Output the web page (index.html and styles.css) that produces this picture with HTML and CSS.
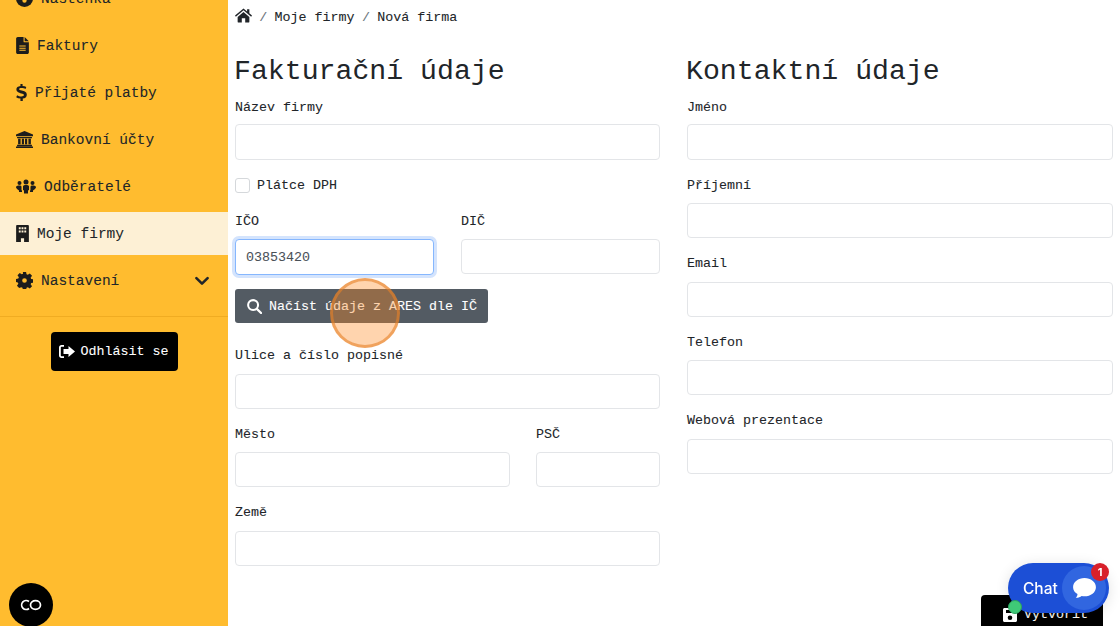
FILE: index.html
```html
<!DOCTYPE html>
<html lang="cs">
<head>
<meta charset="utf-8">
<title>Nová firma</title>
<link rel="stylesheet" href="styles.css">
</head>
<body>
<div class="app">
  <aside class="sidebar">
    <nav class="nav">
      <a class="item"><svg class="ico i-gauge" viewBox="0 0 16 16"><circle cx="8" cy="8" r="8"/><circle cx="8" cy="10" r="2" fill="#ffbc2f"/></svg><span>Nástěnka</span></a>
      <a class="item"><svg class="ico i-file" viewBox="0 0 12 16"><path d="M1.5 0H7v4.200c0 .5.3.8.8.8H12v9.500c0 .8-.7 1.500-1.500 1.500h-9C.7 16 0 15.300 0 14.500v-13C0 .7.700 0 1.500 0zM8 0l4 4H8zM3 8v1h6V8zm0 2v1h6v-1zm0 2v1h6v-1z" fill-rule="evenodd"/></svg><span>Faktury</span></a>
      <a class="item"><svg class="ico i-dollar" viewBox="0 0 10 16"><path d="M4 0h2v1.800c1.300.1 2.600.5 3.500 1L8.800 4.600C7.800 4.100 6.400 3.700 5 3.700c-1.300 0-2.300.4-2.300 1.100 0 .8 1 1 2.500 1.400 2.300.5 4.800 1.200 4.800 3.900 0 2.100-1.500 3.300-3.800 3.600V16H4v-2.300c-1.500-.1-2.900-.6-4-1.300l.9-1.900c1.100.7 2.600 1.200 4 1.200 1.500 0 2.400-.5 2.400-1.300 0-.9-1-1.200-2.500-1.500C2.500 8.300.2 7.600.2 5 .2 3.200 1.600 2.100 4 1.800z"/></svg><span>Přijaté platby</span></a>
      <a class="item"><svg class="ico i-bank" viewBox="0 0 16 16"><path d="M8 0l8 3.200V5H0V3.200zM1 5.600h14v1.200H1zM2 7.200h2.300v5.300H2zm3.500 0h2v5.300h-2zm3 0h2v5.300h-2zm3.200 0H14v5.300h-2.300zM1 13h14v1.300H1zM0 14.600h16V16H0z"/></svg><span>Bankovní účty</span></a>
      <a class="item"><svg class="ico i-users" viewBox="0 0 20 14"><circle cx="10" cy="2.500" r="2.500"/><circle cx="3.500" cy="3.500" r="2"/><circle cx="16.500" cy="3.500" r="2"/><path d="M7 7c0-1 1-1.500 3-1.500S13 6 13 7v3.500l-1 .5V14H8v-3l-1-.5zM1.500 6.300C2 6 3.500 5.800 5 6.300 5.700 7 5.500 8 5.500 10.500L6 11.200V12.500H3V11L1 9.500 0 8c0-1 .7-1.500 1.500-1.700zM18.500 6.300C18 6 16.500 5.800 15 6.300c-.7.7-.5 1.700-.5 4.200l-.5.7v1.300h3V11l2-1.500L20 8c0-1-.7-1.500-1.500-1.700z"/></svg><span>Odběratelé</span></a>
      <a class="item active"><svg class="ico i-file" viewBox="0 0 12 16"><path d="M1 0h10c.6 0 1 .4 1 1v15H7.500v-3.500h-3V16H0V1c0-.6.4-1 1-1zm1.500 2.200v1.800h1.800V2.200zm2.600 0v1.800h1.800V2.200zm2.600 0v1.800h1.800V2.200zM2.500 5.200V7h1.800V5.200zm2.600 0V7h1.800V5.200zm2.600 0V7h1.800V5.200z" fill-rule="evenodd"/></svg><span>Moje firmy</span></a>
      <a class="item"><svg class="ico i-bank" viewBox="0 0 16 16"><path d="M6.500 0h3l.4 2.200 1.200.5L13 1.400l2.100 2.100-1.300 1.900.5 1.200 2.200.4v3l-2.200.4-.5 1.200 1.300 1.900-2.100 2.100-1.900-1.300-1.200.5-.4 2.200h-3l-.4-2.200-1.200-.5L3 15.100.9 13l1.300-1.900-.5-1.200L0 9.500v-3l2.200-.4.5-1.200L1.400 3 3.500.9l1.900 1.300 1.200-.5zM8 5.800a2.200 2.200 0 1 0 0 4.400 2.200 2.200 0 0 0 0-4.400z" fill-rule="evenodd"/></svg><span class="grow">Nastavení</span><svg class="chev" viewBox="0 0 12 8"><path d="M1.200 1.500L6 6.300l4.800-4.800" fill="none" stroke="#212529" stroke-width="2.200" stroke-linecap="round" stroke-linejoin="round"/></svg></a>
    </nav>
    <hr class="divider">
    <div class="logout-wrap">
      <button class="logout"><svg class="ico-logout" viewBox="0 0 16 13"><path d="M0 2.500C0 1.100 1.100 0 2.500 0H5v1.800H2.500c-.4 0-.7.3-.7.7v8c0 .4.300.7.700.700H5V13H2.500C1.100 13 0 11.900 0 10.500zM9.500 1L16 6.500 9.500 12V9H4.500V4h5z"/></svg>Odhlásit se</button>
    </div>
  </aside>

  <main class="main">
    <div class="crumbs">
      <svg class="home" viewBox="0 0 18 15"><path d="M9 0l3.800 3.200V1h2.400v4.200L18 7.600l-.9 1.100L9 2 .9 8.700 0 7.600zM2.800 9L9 3.800 15.200 9v5c0 .6-.4 1-1 1h-3.400v-4.500H7.200V15H3.800c-.6 0-1-.4-1-1z"/></svg>
      <span class="sep">/</span><span>Moje firmy</span><span class="sep">/</span><span>Nová firma</span>
    </div>
    <div class="columns">
      <section class="col">
        <h2>Fakturační údaje</h2>
        <div class="field"><label>Název firmy</label><input class="tall" type="text"></div>
        <div class="check"><span class="box"></span><span>Plátce DPH</span></div>
        <div class="row ico-row">
          <div class="field"><label>IČO</label><input class="focus" type="text" value="03853420"></div>
          <div class="field"><label>DIČ</label><input type="text"></div>
        </div>
        <button class="ares"><svg class="search" viewBox="0 0 16 16"><circle cx="6.500" cy="6.500" r="5.300" fill="none" stroke="#fff" stroke-width="2.200"/><path d="M10.500 10.500L15 15" stroke="#fff" stroke-width="2.400" stroke-linecap="round"/></svg>Načíst údaje z ARES dle IČ</button>
        <div class="field"><label>Ulice a číslo popisné</label><input type="text"></div>
        <div class="row city-row">
          <div class="field"><label>Město</label><input type="text"></div>
          <div class="field"><label>PSČ</label><input type="text"></div>
        </div>
        <div class="field"><label>Země</label><input type="text"></div>
      </section>
      <section class="col">
        <h2>Kontaktní údaje</h2>
        <div class="field"><label>Jméno</label><input class="tall" type="text"></div>
        <div class="field"><label>Příjemní</label><input type="text"></div>
        <div class="field"><label>Email</label><input type="text"></div>
        <div class="field"><label>Telefon</label><input type="text"></div>
        <div class="field"><label>Webová prezentace</label><input type="text"></div>
      </section>
    </div>
    <div class="actions">
      <button class="create"><svg class="save" viewBox="0 0 14 14"><path d="M1.500 0H11l3 3v9.500c0 .8-.7 1.500-1.500 1.500h-11C.7 14 0 13.300 0 12.500v-11C0 .7.700 0 1.500 0zM3 2v3h6V2zm4 5.500a2.300 2.300 0 1 0 0 4.600 2.300 2.300 0 0 0 0-4.600z" fill-rule="evenodd"/></svg>Vytvořit</button>
    </div>
  </main>
</div>

<div class="cursor"></div>
<div class="cookie"><svg viewBox="0 0 24 12"><path d="M10 2.500A4.500 4.500 0 1 0 10 9.500" fill="none" stroke="#fff" stroke-width="1.700"/><ellipse cx="16.500" cy="6" rx="5" ry="4.300" fill="none" stroke="#fff" stroke-width="1.700"/></svg></div>
<div class="chat">
  <span class="chat-label">Chat</span>
  <span class="chat-bubble"><svg viewBox="0 0 24 21"><path d="M12 0c6.600 0 12 4.200 12 9.600s-5.400 9.600-12 9.600c-1 0-2-.1-3-.3C7.500 20.200 5 21 2.800 20.800 4 19.800 4.700 18.300 4.600 16.900 1.800 15.100 0 12.600 0 9.600 0 4.200 5.400 0 12 0z" fill="#fff"/></svg></span>
  <span class="chat-badge">1</span>
</div>
<div class="online"></div>
</body>
</html>
```
FILE: styles.css
```css
* { box-sizing: border-box; }
html, body { margin: 0; height: 626px; overflow: hidden; background: #fff; }
body { font-family: "Liberation Mono", monospace; font-size: 13.33px; color: #212529; -webkit-text-stroke: .08px; }
.app { display: flex; height: 626px; overflow: hidden; }

.sidebar { width: 228px; flex: none; background: #ffbc2f; height: 626px; }
.nav { display: flex; flex-direction: column; gap: 4px; margin-top: -23px; }
.item { display: flex; align-items: center; height: 43px; padding: 0 16px; font-size: 14.500px; color: #212529; gap: 8px; }
.item.active { background: #fdf0d5; }
.grow { flex: 1; }
.ico { fill: #1c1c1c; flex: none; }
.i-gauge { width: 17px; height: 17px; }
.i-file { width: 13px; height: 17px; }
.i-dollar { width: 11px; height: 17px; }
.i-bank { width: 17px; height: 17px; }
.i-users { width: 20px; height: 15px; }
.chev { width: 14px; height: 10px; margin-right: 3px; }
.divider { border: 0; border-top: 1px solid #f0ac22; margin: 14px 0 15px; }
.logout-wrap { display: flex; justify-content: center; }
.logout { display: flex; align-items: center; gap: 6px; height: 39px; width: 127px; padding: 0 8px; background: #000; color: #fff; border: 0; border-radius: 4px; font: 13.33px "Liberation Mono", monospace; white-space: nowrap; }
.ico-logout { width: 16px; height: 13px; fill: #fff; flex: none; }

.main { flex: 1; min-width: 0; padding: 0 7px; }
.crumbs { display: flex; align-items: center; height: 33px; padding-top: 2px; gap: 7.300px; }
.home { width: 17px; height: 15px; fill: #212529; margin-bottom: 4px; }
.sep { color: #6c757d; }
.columns { display: grid; grid-template-columns: 425px 426px; column-gap: 27px; }
h2 { margin: 22px 0 8.500px; font-size: 28.200px; font-weight: 400; line-height: 34px; margin-left: -1px; -webkit-text-stroke: 0; }
.field { display: flex; flex-direction: column; margin-bottom: 16px; }
.field label { height: 20px; line-height: 20px; margin-bottom: 7.500px; }
input { width: 100%; height: 35px; border: 1px solid #e3e5e8; border-radius: 4px; padding: 0 10px; font: 13.33px "Liberation Mono", monospace; color: #495057; background: #fff; outline: 0; }
input.tall { height: 36px; margin-top: -1.500px; }
input.focus { border-color: #86b7fe; box-shadow: 0 0 0 3px #d4e4fd; height: 36px; }
.check { display: flex; align-items: center; gap: 7px; height: 20px; margin: 0 0 16px; }
.box { width: 15px; height: 15px; border: 1px solid #d5d8db; border-radius: 3px; }
.row { display: grid; column-gap: 27px; }
.ico-row { grid-template-columns: 199px 199px; }
.ico-row .field { margin-bottom: 14px; }
.city-row { grid-template-columns: 275px 124px; column-gap: 26px; }
.ares { display: flex; align-items: center; gap: 7px; width: 253px; height: 34px; padding: 0 12px; background: #535b63; color: #fff; border: 0; border-radius: 3px; font: 13.33px "Liberation Mono", monospace; margin-bottom: 23px; white-space: nowrap; }
.search { width: 15px; height: 15px; flex: none; }
.actions { display: flex; padding-left: 746px; margin-top: 13px; }
.create { display: flex; align-items: center; gap: 7px; width: 122px; height: 40px; padding: 0 0 0 22px; background: #000; color: #fff; border: 0; border-radius: 4px; font: 13.33px "Liberation Mono", monospace; }
.save { width: 14px; height: 14px; fill: #fff; flex: none; }

.cursor { position: fixed; left: 330px; top: 278px; width: 70px; height: 70px; border-radius: 50%; background: rgba(255, 137, 31, .36); border: 3px solid rgba(230, 130, 40, .6); }
.cookie { position: fixed; left: 9px; top: 583px; width: 44px; height: 44px; border-radius: 50%; background: #000; display: flex; align-items: center; justify-content: center; }
.cookie svg { width: 24px; height: 12px; }
.chat { position: fixed; left: 1008px; top: 563px; width: 101px; height: 50px; border-radius: 25px; background: #1c4fd6; box-shadow: 0 2px 14px rgba(0, 0, 0, .12); }
.chat-label { position: absolute; left: 15px; top: 16px; font: 500 15.500px/20px "Inter", sans-serif; color: #fff; -webkit-text-stroke: 0; }
.chat-bubble { position: absolute; right: 3px; top: 3px; width: 44px; height: 44px; border-radius: 50%; background: #3166e0; display: flex; align-items: center; justify-content: center; }
.chat-bubble svg { width: 23px; height: 20px; }
.chat-badge { position: absolute; left: 83px; top: 0; width: 18px; height: 18px; border-radius: 50%; background: #d8202a; color: #fff; font: 700 11px/18px "Inter", sans-serif; text-align: center; -webkit-text-stroke: 0; }
.online { position: fixed; left: 1008px; top: 600px; width: 14px; height: 14px; border-radius: 50%; background: #3fc977; border: 1px solid #2aa35e; }
```
